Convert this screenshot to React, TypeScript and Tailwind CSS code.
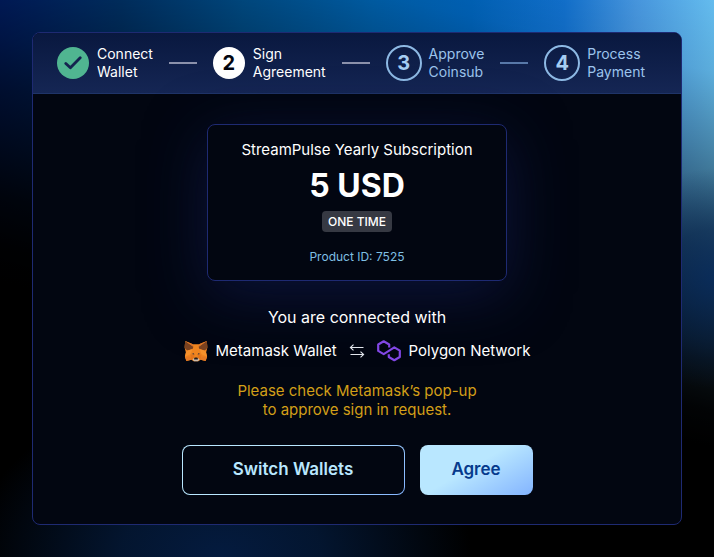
import React from 'react';

interface Step {
  id: number;
  label: [string, string];
  status: 'done' | 'current' | 'upcoming';
}

const STEPS: Step[] = [
  { id: 1, label: ['Connect', 'Wallet'], status: 'done' },
  { id: 2, label: ['Sign', 'Agreement'], status: 'current' },
  { id: 3, label: ['Approve', 'Coinsub'], status: 'upcoming' },
  { id: 4, label: ['Process', 'Payment'], status: 'upcoming' },
];

const StepBadge: React.FC<{ step: Step }> = ({ step }) => {
  if (step.status === 'done') {
    return (
      <span className="flex size-8 shrink-0 items-center justify-center rounded-full bg-[#50b591]">
        <svg width="18" height="14" viewBox="0 0 18 14" fill="none" aria-hidden="true">
          <path d="M1.8 7.4 6.4 11.8 16.2 1.8" stroke="#14234f" strokeWidth="2.8" strokeLinecap="round" strokeLinejoin="round" />
        </svg>
      </span>
    );
  }
  if (step.status === 'current') {
    return (
      <span className="flex size-8 shrink-0 items-center justify-center rounded-full bg-white text-xl font-bold text-[#020611]">
        {step.id}
      </span>
    );
  }
  return (
    <span className="flex size-9 shrink-0 items-center justify-center rounded-full border-2 border-[#8db9e4] text-xl font-bold text-[#a5cdf3]">
      {step.id}
    </span>
  );
};

const Stepper: React.FC = () => (
  <ol className="flex items-center justify-between rounded-t-[7px] border-b border-[#1f3468] bg-linear-to-b from-[#09183f] to-[#152654] py-3 pr-9 pl-6">
    {STEPS.map((step, idx) => (
      <React.Fragment key={step.id}>
        {idx > 0 && (
          <li
            aria-hidden="true"
            className={`h-0.5 w-7 ${step.id === 4 ? 'bg-[#5878a8]' : 'bg-[#8b91ab]'}`}
          />
        )}
        <li className={`flex items-center ${step.status === 'upcoming' ? 'gap-[7px] text-[#9cc4ec]' : 'gap-2 text-white'}`}>
          <StepBadge step={step} />
          <span className="text-sm leading-[18px]">
            {step.label[0]}
            <br />
            {step.label[1]}
          </span>
        </li>
      </React.Fragment>
    ))}
  </ol>
);

const MetamaskLogo: React.FC = () => (
  <svg width="24" height="22" viewBox="0 0 24 22" aria-hidden="true">
    <path d="M1.2 1 9 4.2h6L22.8 1l.6 6.6-1.3 5 1 4.1-1.5 4.2-5-1.2-2.2 1.5H9.6l-2.2-1.5-5 1.2L.9 16.7l1-4.1-1.3-5z" fill="#f0851f" />
    <path d="M1.2 1 9.4 6.8 8.6 9 3.6 10.4 1.3 9 .7 6.5z" fill="#7a4220" />
    <path d="m22.8 1-8.2 5.8.8 2.2 5 1.4L22.7 9l.6-2.5z" fill="#7a4220" />
    <path d="M1.2 1 9 4.2l.4 2.6zM22.8 1 15 4.2l-.4 2.6z" fill="#dc7426" />
    <path d="m3.6 10.4 5-1.4-2.2 5.2-5.5 2.5 1-4.1zM20.4 10.4l-5-1.4 2.2 5.2 5.5 2.5-1-4.1z" fill="#f6912b" />
    <path d="m.9 16.7 5.5-.2 1 3.2-5 1.2zM23.1 16.7l-5.5-.2-1 3.2 5 1.2z" fill="#e57a24" />
    <path d="m7.6 13.9 2.2-.8.6 1.7zM16.4 13.9l-2.2-.8-.6 1.7z" fill="#5b4038" />
    <path d="m6.4 14.6 4.2.7-1 3.2-2.2 1.2zM17.6 14.6l-4.2.7 1 3.2 2.2 1.2z" fill="#e5761b" />
    <path d="m8.6 19.2 1.4-.9h4l1.4.9-1.4 2H10z" fill="#cbbdb0" />
    <path d="m10.2 18.2.6-.6h2.4l.6.6.1 1.4h-3.8z" fill="#251c1a" />
  </svg>
);

const PolygonLogo: React.FC = () => (
  <svg width="24" height="22" viewBox="0 0 24 22" fill="none" aria-hidden="true">
    <path
      d="M12.2 7.4V4.5L6.7 1.3 1.2 4.5V10.9L6.7 14.1 17.3 7.4 22.8 10.6V17L17.3 20.2 11.8 17V14.2"
      stroke="#8247e5"
      strokeWidth="2.2"
      strokeLinejoin="round"
    />
  </svg>
);

const SwapArrows: React.FC = () => (
  <svg width="16" height="14" viewBox="0 0 16 14" fill="none" stroke="#e2e5ec" strokeWidth="1.1" aria-hidden="true">
    <path d="M14.5 3.5h-13M4.5.6 1.4 3.5l3.1 2.9M1.5 10.5h13M11.5 7.6l3.1 2.9-3.1 2.9" />
  </svg>
);

const ProductCard: React.FC = () => (
  <section className="flex w-[300px] max-w-full flex-col items-center rounded-lg border border-[#1e2a72] bg-[#020611] pt-[13px] pb-[13px] text-center shadow-[0_14px_60px_0_#0b1339]">
    <h1 className="text-[15px] leading-6">StreamPulse Yearly Subscription</h1>
    <p className="mt-2 text-[32px] leading-8 font-bold">5 USD</p>
    <span className="mt-[9px] rounded bg-[#363943] px-1.5 text-xs leading-[21px] font-medium">ONE TIME</span>
    <p className="mt-[15px] text-xs leading-5 text-[#7fbfe3]">Product ID: 7525</p>
  </section>
);

const App: React.FC = () => {
  return (
    <main className="flex min-h-screen flex-col bg-black bg-[radial-gradient(ellipse_110px_110px_at_100%_50%,#00255fb0_0%,#001f5080_45%,transparent_100%),radial-gradient(ellipse_250px_170px_at_31%_100%,#041b3f_0%,#041a3ad0_40%,transparent_100%),linear-gradient(193deg,#0000_0%,#00000014_10%,#00000047_20%,#00000073_28%,#0000009e_35%,#000000c4_43%,#000000e6_50%,#000000fa_57%,#000_62%),linear-gradient(90deg,#00257d_0%,#003b7a_17%,#005596_34%,#0063b0_52%,#0065bd_66%,#1272d0_79%,#4797e0_89%,#64bcee_100%)] p-8 font-['Inter',sans-serif] text-white">
      <div className="flex flex-1 flex-col rounded-lg border border-[#1e2a72] bg-[#020611]">
        <Stepper />

        <div className="flex flex-col items-center px-6 pt-[30px] pb-7">
          <ProductCard />

          <p className="relative mt-6 text-base leading-6">You are connected with</p>

          <div className="relative mt-2.5 flex items-center gap-3 text-[15px] leading-6">
            <span className="flex items-center gap-2">
              <MetamaskLogo />
              Metamask Wallet
            </span>
            <SwapArrows />
            <span className="flex items-center gap-2">
              <PolygonLogo />
              Polygon Network
            </span>
          </div>

          <p className="mt-[18px] text-center text-[15px] leading-[19px] text-[#d29f18]">
            Please check Metamask’s pop-up
            <br />
            to approve sign in request.
          </p>

          <div className="mt-[26px] flex gap-[15px]">
            <button
              type="button"
              className="h-[50px] w-[223px] rounded-lg border border-transparent bg-[linear-gradient(#020611,#020611),linear-gradient(135deg,#b9e7ff_50%,#83b4ff)] bg-origin-border [background-clip:padding-box,border-box] text-[17px] font-semibold text-[#b9e7ff]"
            >
              Switch Wallets
            </button>
            <button
              type="button"
              className="h-[50px] w-[113px] rounded-lg bg-[linear-gradient(150deg,#b9e7ff_45%,#83b4ff)] text-[17px] font-semibold text-[#063a8c]"
            >
              Agree
            </button>
          </div>
        </div>
      </div>
    </main>
  );
};

export default App;
